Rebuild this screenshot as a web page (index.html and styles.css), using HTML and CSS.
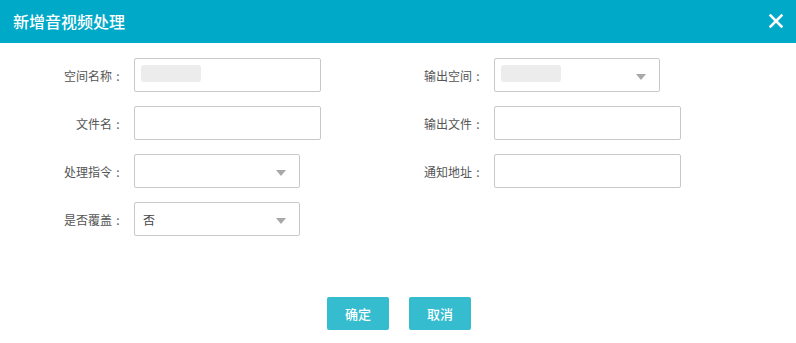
FILE: index.html
```html
<!DOCTYPE html>
<html lang="zh-CN">
<head>
    <meta charset="UTF-8">
    <title>新增音视频处理</title>
    <link rel="stylesheet" href="styles.css">
</head>
<body>
    <div class="dialog">
        <div class="dialog-header">
            <span class="dialog-title">新增音视频处理</span>
            <span class="dialog-close">
                <svg width="14" height="14" viewBox="0 0 14 14">
                    <path d="M1.5 1.5 L12.5 12.5 M12.5 1.5 L1.5 12.5" stroke="#fff" stroke-width="2.6" stroke-linecap="square"/>
                </svg>
            </span>
        </div>
        <div class="dialog-body">
            <div class="form">
                <div class="row">
                    <label class="label">空间名称<span class="colon">:</span></label>
                    <div class="input"><span class="masked"></span></div>
                </div>
                <div class="row">
                    <label class="label">输出空间<span class="colon">:</span></label>
                    <div class="input select"><span class="masked"></span><span class="caret"></span></div>
                </div>
                <div class="row">
                    <label class="label">文件名<span class="colon">:</span></label>
                    <div class="input"></div>
                </div>
                <div class="row">
                    <label class="label">输出文件<span class="colon">:</span></label>
                    <div class="input"></div>
                </div>
                <div class="row">
                    <label class="label">处理指令<span class="colon">:</span></label>
                    <div class="input select"><span class="caret"></span></div>
                </div>
                <div class="row">
                    <label class="label">通知地址<span class="colon">:</span></label>
                    <div class="input"></div>
                </div>
                <div class="row">
                    <label class="label">是否覆盖<span class="colon">:</span></label>
                    <div class="input select"><span class="value">否</span><span class="caret"></span></div>
                </div>
            </div>
            <div class="actions">
                <button class="btn">确定</button>
                <button class="btn">取消</button>
            </div>
        </div>
    </div>
</body>
</html>
```

FILE: styles.css
```css
body {
    margin: 0;
    padding: 0;
    background-color: #fff;
    font-family: "Noto Sans CJK SC", "Liberation Sans", sans-serif;
    font-size: 12px;
    color: #555;
}
.dialog {
    width: 796px;
    height: 343px;
    background-color: #fff;
}
.dialog-header {
    height: 43px;
    background-color: #00a9c8;
    display: flex;
    align-items: center;
    justify-content: space-between;
    padding: 0 13px;
}
.dialog-title {
    color: #fff;
    font-size: 16px;
    font-weight: 500;
    line-height: 20px;
    margin-top: -2px;
}
.dialog-close {
    display: flex;
    width: 14px;
    height: 14px;
    margin-top: -1px;
}
.dialog-body {
    padding-top: 15px;
}
.form {
    display: grid;
    grid-template-columns: 360px 360px;
    row-gap: 14px;
    padding-left: 40px;
}
.row {
    display: flex;
    align-items: center;
    height: 34px;
}
.label {
    width: 84px;
    margin-right: 10px;
    text-align: right;
    color: #555;
    font-size: 12px;
}
.colon {
    display: inline-block;
    width: 12px;
    text-align: center;
}
.input {
    position: relative;
    box-sizing: border-box;
    width: 187px;
    height: 34px;
    border: 1px solid #c8c8c8;
    border-radius: 2px;
    display: flex;
    align-items: center;
    padding-left: 6px;
}
.select {
    width: 166px;
}
.masked {
    display: block;
    width: 60px;
    height: 17px;
    background-color: #ececec;
    border-radius: 3px;
    margin-top: -3px;
}
.value {
    color: #444;
    font-size: 12px;
    padding-left: 2px;
}
.caret {
    position: absolute;
    right: 13px;
    top: 15px;
    width: 0;
    height: 0;
    border-left: 5px solid transparent;
    border-right: 5px solid transparent;
    border-top: 6px solid #a8a8a8;
}
.actions {
    display: flex;
    justify-content: center;
    gap: 20px;
    margin-top: 61px;
    padding-left: 2px;
}
.btn {
    width: 62px;
    height: 33px;
    border: none;
    border-radius: 2px;
    background-color: #35bccf;
    color: #fff;
    font-family: "Noto Sans CJK SC", sans-serif;
    font-size: 13px;
    font-weight: 500;
    padding: 0;
}
```
